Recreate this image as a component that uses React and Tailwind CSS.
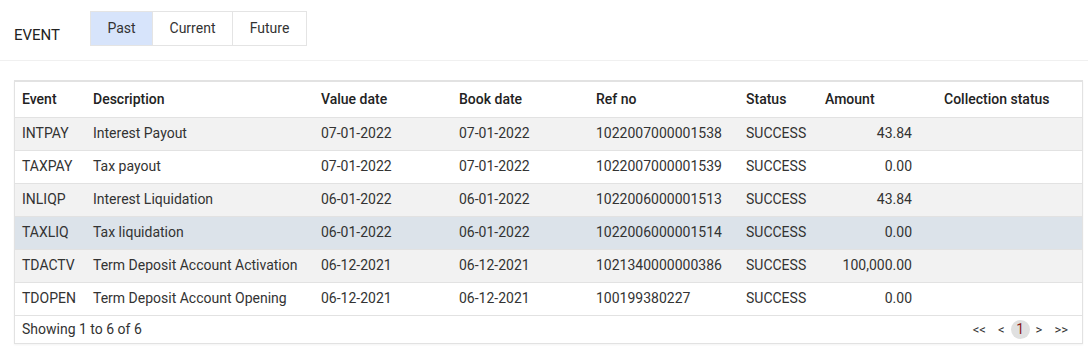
import React, { useState } from 'react';

// ── Data ─────────────────────────────────────────────────────────────────────

const ROWS = [
  { ev: 'INTPAY', desc: 'Interest Payout', val: '07-01-2022', book: '07-01-2022', ref: '1022007000001538', amt: '43.84' },
  { ev: 'TAXPAY', desc: 'Tax payout', val: '07-01-2022', book: '07-01-2022', ref: '1022007000001539', amt: '0.00' },
  { ev: 'INLIQP', desc: 'Interest Liquidation', val: '06-01-2022', book: '06-01-2022', ref: '1022006000001513', amt: '43.84' },
  { ev: 'TAXLIQ', desc: 'Tax liquidation', val: '06-01-2022', book: '06-01-2022', ref: '1022006000001514', amt: '0.00' },
  { ev: 'TDACTV', desc: 'Term Deposit Account Activation', val: '06-12-2021', book: '06-12-2021', ref: '1021340000000386', amt: '100,000.00' },
  { ev: 'TDOPEN', desc: 'Term Deposit Account Opening', val: '06-12-2021', book: '06-12-2021', ref: '100199380227', amt: '0.00' },
];

const TABS = [
  { key: 'past', label: 'Past', w: 'w-[61px]' },
  { key: 'current', label: 'Current', w: 'w-[80px]' },
  { key: 'future', label: 'Future', w: 'w-[74px]' },
];

function rowBg(i, hovered) {
  if (i === hovered) return 'bg-[#dce3ea]';
  return i % 2 === 0 ? 'bg-[#f2f2f2]' : 'bg-white';
}

// ── Main component ────────────────────────────────────────────────────────────

export default function App() {
  const [tab, setTab] = useState('past');
  const hovered = 3;

  return (
    <div className="w-[1088px] h-[352px] bg-white text-[14px] text-[#333] font-['Roboto',sans-serif]">
      {/* ── Title + tabs ─────────────────────────────────────────── */}
      <div className="flex items-center h-[61px] pl-[14px] pt-[10px] border-b border-[#f0f0f0]">
        <span className="text-[15px] text-[#222] w-[76px]">EVENT</span>
        <div className="flex border border-[#e4e4e4] h-[35px] -mt-[14px]">
          {TABS.map((t, i) => (
            <button
              key={t.key}
              onClick={() => setTab(t.key)}
              className={`${t.w} h-full text-[14px] text-[#333] ${i > 0 ? 'border-l border-[#e4e4e4]' : ''} ${tab === t.key ? 'bg-[#d7e4fb]' : 'bg-white'}`}
            >
              {t.label}
            </button>
          ))}
        </div>
      </div>

      {/* ── Table ────────────────────────────────────────────────── */}
      <div className="ml-[14px] mr-[5px] mt-[19px] border border-[#e2e2e2] border-t-2 shadow-[0_1px_2px_rgba(0,0,0,0.05)]">
        <table className="w-full table-fixed border-collapse">
          <colgroup>
            <col className="w-[71px]" />
            <col className="w-[228px]" />
            <col className="w-[138px]" />
            <col className="w-[137px]" />
            <col className="w-[150px]" />
            <col className="w-[79px]" />
            <col className="w-[119px]" />
            <col />
          </colgroup>
          <thead>
            <tr className="h-[35px] text-left text-[#222]">
              <th className="pl-[7px] font-medium">Event</th>
              <th className="pl-[7px] font-medium">Description</th>
              <th className="pl-[7px] font-medium">Value date</th>
              <th className="pl-[7px] font-medium">Book date</th>
              <th className="pl-[7px] font-medium">Ref no</th>
              <th className="pl-[7px] font-medium">Status</th>
              <th className="pl-[7px] font-medium">Amount</th>
              <th className="pl-[7px] font-medium">Collection status</th>
            </tr>
          </thead>
          <tbody>
            {ROWS.map((r, i) => (
              <tr key={r.ev} className={`h-[33px] border-t border-[#e2e2e2] ${rowBg(i, hovered)}`}>
                <td className="pl-[7px]">{r.ev}</td>
                <td className="pl-[7px] whitespace-nowrap">{r.desc}</td>
                <td className="pl-[7px]">{r.val}</td>
                <td className="pl-[7px]">{r.book}</td>
                <td className="pl-[7px]">{r.ref}</td>
                <td className="pl-[7px]">SUCCESS</td>
                <td className="pr-[25px] text-right">{r.amt}</td>
                <td />
              </tr>
            ))}
          </tbody>
        </table>

        {/* ── Footer / pagination ──────────────────────────────── */}
        <div className="flex items-center justify-between h-[28px] border-t border-[#e2e2e2] pl-[7px] pr-[14px]">
          <span className="text-[14px]">Showing 1 to 6 of 6</span>
          <div className="flex items-center text-[13px] text-[#333]">
            <span className="mr-[12px]">&lt;&lt;</span>
            <span className="mr-[6px]">&lt;</span>
            <span className="w-[19px] h-[19px] rounded-full bg-[#e0e0e0] flex items-center justify-center text-[#8a1c1c] text-[14px]">1</span>
            <span className="ml-[6px]">&gt;</span>
            <span className="ml-[12px]">&gt;&gt;</span>
          </div>
        </div>
      </div>
    </div>
  );
}
